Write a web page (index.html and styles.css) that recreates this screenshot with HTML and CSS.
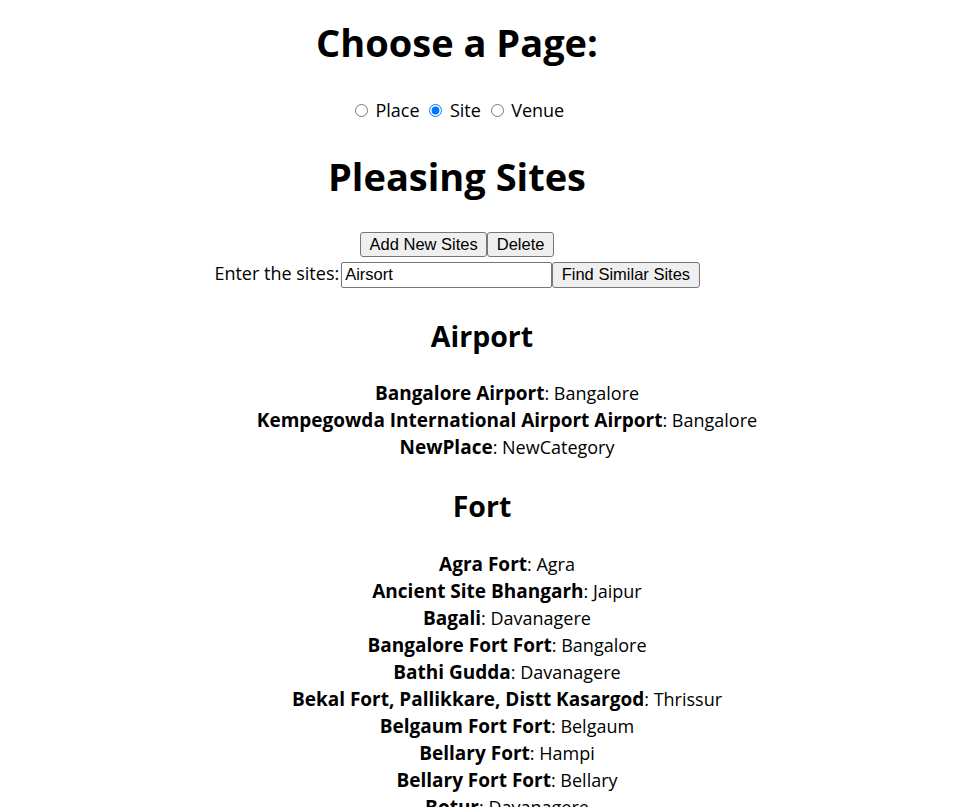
FILE: index.html
```html
<!DOCTYPE html>
<html lang="en">
<head>
<meta charset="utf-8">
<title>Pleasing Sites</title>
<link rel="stylesheet" href="styles.css">
</head>
<body>
<div class="top">
  <h1 class="title title-choose">Choose a Page:</h1>
  <div class="radios">
    <label class="radio"><input type="radio" name="page"> Place</label>
    <label class="radio"><input type="radio" name="page" checked> Site</label>
    <label class="radio"><input type="radio" name="page"> Venue</label>
  </div>
  <h1 class="title title-sites">Pleasing Sites</h1>
  <div class="actions">
    <button class="btn" type="button">Add New Sites</button>
    <button class="btn" type="button">Delete</button>
  </div>
  <div class="search">
    <label class="search-label" for="sites">Enter the sites:</label>
    <input class="search-input" id="sites" type="text" value="Airsort">
    <button class="btn btn-find" type="button">Find Similar Sites</button>
  </div>
</div>
<div class="results">
  <section class="group">
    <h2 class="group-title">Airport</h2>
    <ul class="list">
      <li class="item"><b class="name">Bangalore Airport</b>: Bangalore</li>
      <li class="item"><b class="name">Kempegowda International Airport Airport</b>: Bangalore</li>
      <li class="item"><b class="name">NewPlace</b>: NewCategory</li>
    </ul>
  </section>
  <section class="group">
    <h2 class="group-title">Fort</h2>
    <ul class="list">
      <li class="item"><b class="name">Agra Fort</b>: Agra</li>
      <li class="item"><b class="name">Ancient Site Bhangarh</b>: Jaipur</li>
      <li class="item"><b class="name">Bagali</b>: Davanagere</li>
      <li class="item"><b class="name">Bangalore Fort Fort</b>: Bangalore</li>
      <li class="item"><b class="name">Bathi Gudda</b>: Davanagere</li>
      <li class="item"><b class="name">Bekal Fort, Pallikkare, Distt Kasargod</b>: Thrissur</li>
      <li class="item"><b class="name">Belgaum Fort Fort</b>: Belgaum</li>
      <li class="item"><b class="name">Bellary Fort</b>: Hampi</li>
      <li class="item"><b class="name">Bellary Fort Fort</b>: Bellary</li>
      <li class="item"><b class="name">Botur</b>: Davanagere</li>
    </ul>
  </section>
</div>
</body>
</html>
```
FILE: styles.css
```css
html {
  overflow: hidden;
}

body {
  margin: 0;
  font-family: "Open Sans", "Noto Sans", sans-serif;
  font-size: 18px;
  line-height: 27px;
  color: #000;
  background: #fff;
}

.top {
  width: 914px;
  padding-top: 16px;
  text-align: center;
}

.title {
  margin: 0;
  font-size: 38px;
  line-height: 53px;
  font-weight: 700;
}

.radios {
  margin-top: 28px;
  height: 27px;
  line-height: 27px;
}

.radio input {
  margin: 3px 3px 0 5px;
}

.title-sites {
  margin-top: 26px;
}

.actions {
  display: flex;
  justify-content: center;
  margin-top: 29px;
}

.btn {
  box-sizing: border-box;
  height: 25px;
  padding: 0 8.5px;
  font-family: "Liberation Sans", Arial, sans-serif;
  font-size: 16.5px;
  color: #000;
  background: #efefef;
  border: 1px solid #767676;
  border-radius: 3px;
}

.search {
  display: flex;
  justify-content: center;
  align-items: baseline;
  margin-top: 3px;
}

.search-label {
  font-size: 18px;
  margin-right: 2px;
}

.search-input {
  box-sizing: border-box;
  width: 211px;
  height: 26px;
  padding: 1px 3px;
  font-family: "Liberation Sans", Arial, sans-serif;
  font-size: 16.5px;
  color: #000;
  border: 1px solid #767676;
  border-radius: 2px;
}

.btn-find {
  height: 26px;
}

.results {
  width: 964px;
  padding-top: 3px;
  text-align: center;
}

.group-title {
  margin: 25px 0 24.5px;
  font-size: 28.5px;
  line-height: 40px;
  font-weight: 700;
}

.list {
  list-style: none;
  margin: 0;
  padding: 0 0 0 50px;
}

.item {
  font-size: 18px;
  line-height: 27px;
}

.name {
  font-size: 19px;
  font-weight: 700;
}
```
